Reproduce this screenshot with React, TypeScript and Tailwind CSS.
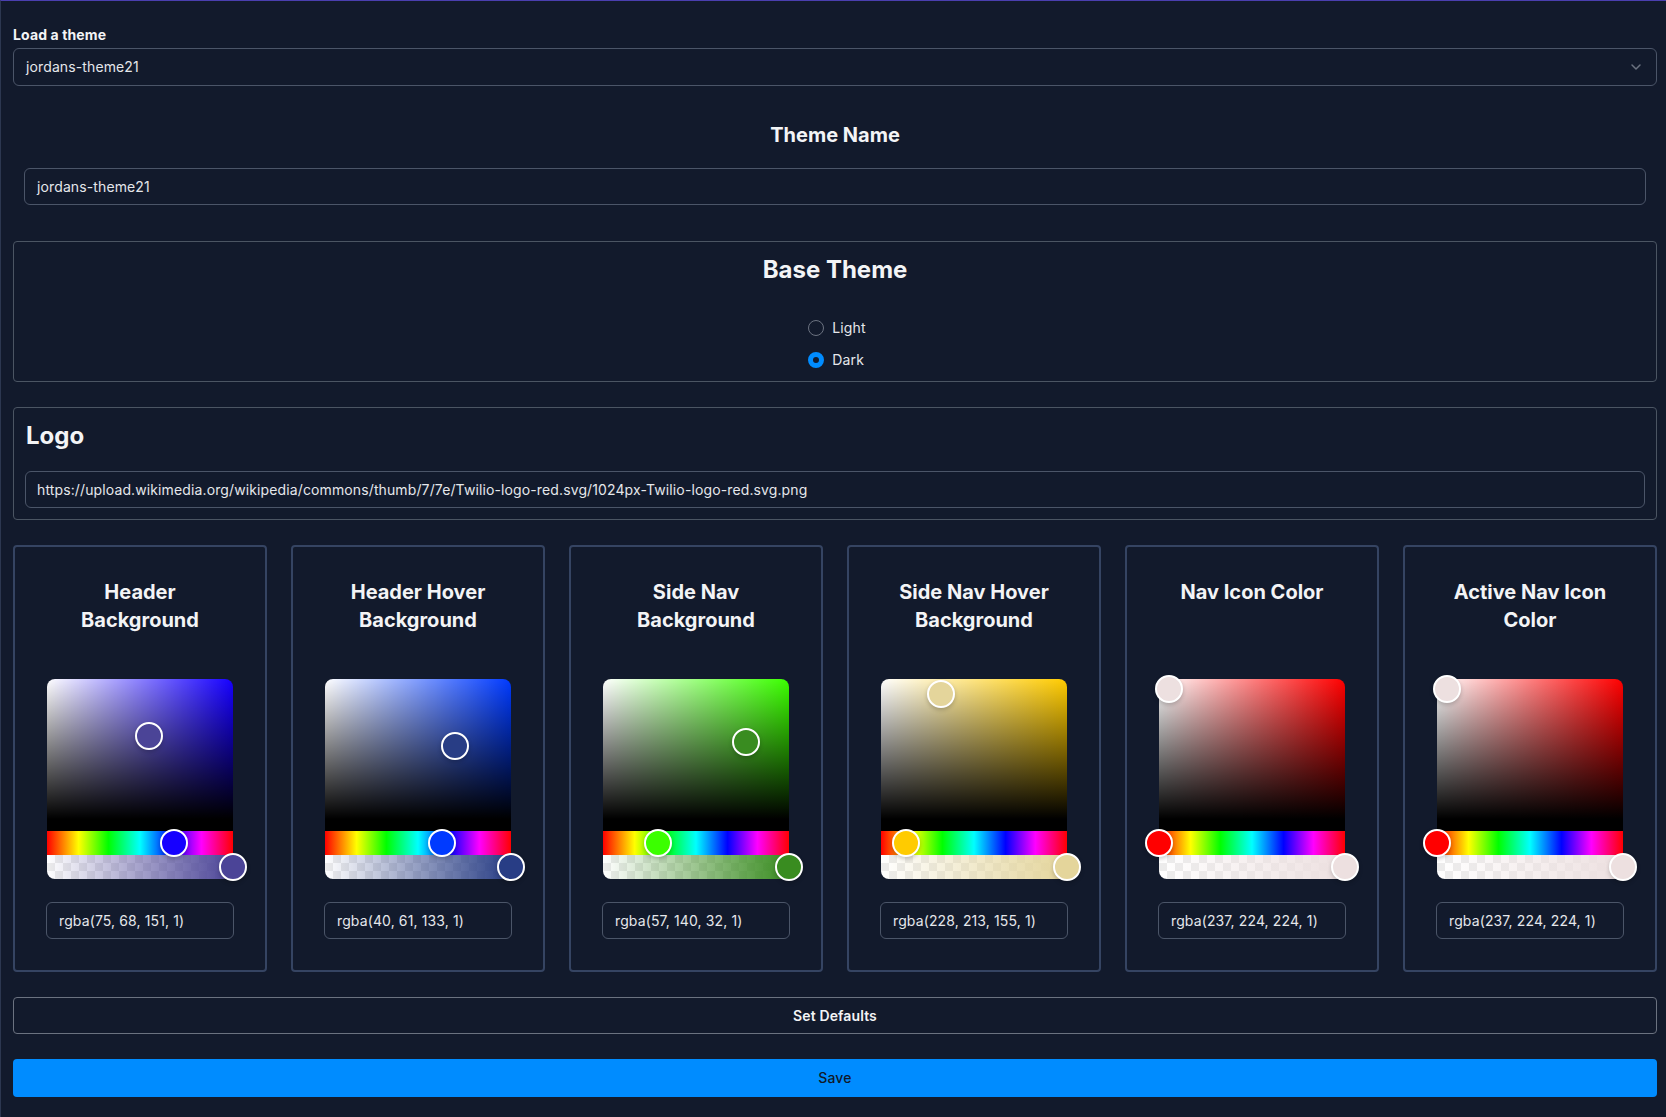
import React from "react";
import { ChevronDown } from "lucide-react";

type RGB = [number, number, number];

function rgbToHsv([r, g, b]: RGB) {
  const rr = r / 255, gg = g / 255, bb = b / 255;
  const max = Math.max(rr, gg, bb), min = Math.min(rr, gg, bb);
  const d = max - min;
  let h = 0;
  if (d !== 0) {
    if (max === rr) h = ((gg - bb) / d) % 6;
    else if (max === gg) h = (bb - rr) / d + 2;
    else h = (rr - gg) / d + 4;
    h *= 60;
    if (h < 0) h += 360;
  }
  const s = max === 0 ? 0 : d / max;
  return { h, s, v: max };
}

const Pointer = ({ left, top, color }: { left: string; top: string; color: string }) => (
  <div
    className="absolute z-10 h-7 w-7 -translate-x-1/2 -translate-y-1/2 rounded-full border-2 border-white shadow-[0_2px_4px_rgba(0,0,0,0.2)]"
    style={{ left, top, backgroundColor: color }}
  />
);

function Picker({ rgb }: { rgb: RGB }) {
  const { h, s, v } = rgbToHsv(rgb);
  const [r, g, b] = rgb;
  const col = `rgb(${r}, ${g}, ${b})`;
  return (
    <div className="relative flex h-[200px] w-[186px] flex-col select-none">
      <div
        className="relative h-[140px] rounded-t-lg"
        style={{
          backgroundColor: `hsl(${h}, 100%, 50%)`,
          backgroundImage:
            "linear-gradient(to top, #000, rgba(0,0,0,0)), linear-gradient(to right, #fff, rgba(255,255,255,0))",
        }}
      >
        <Pointer left={`${s * 100}%`} top={`${(1 - v) * 100}%`} color={col} />
      </div>
      <div className="h-3 bg-black" />
      <div className="relative h-6 bg-[linear-gradient(to_right,#f00_0%,#ff0_17%,#0f0_33%,#0ff_50%,#00f_67%,#f0f_83%,#f00_100%)]">
        <Pointer left={`${(h / 360) * 100}%`} top="50%" color={`hsl(${h}, 100%, 50%)`} />
      </div>
      <div
        className="relative h-6 rounded-b-lg"
        style={{
          background: `linear-gradient(to right, rgba(${r}, ${g}, ${b}, 0), rgba(${r}, ${g}, ${b}, 1)), repeating-conic-gradient(#ececec 0% 25%, #ffffff 0% 50%) 0 0 / 16px 16px`,
        }}
      >
        <Pointer left="100%" top="50%" color={col} />
      </div>
    </div>
  );
}

const cards: { title: string[]; rgb: RGB }[] = [
  { title: ["Header", "Background"], rgb: [75, 68, 151] },
  { title: ["Header Hover", "Background"], rgb: [40, 61, 133] },
  { title: ["Side Nav", "Background"], rgb: [57, 140, 32] },
  { title: ["Side Nav Hover", "Background"], rgb: [228, 213, 155] },
  { title: ["Nav Icon Color"], rgb: [237, 224, 224] },
  { title: ["Active Nav Icon", "Color"], rgb: [237, 224, 224] },
];

export default function App() {
  return (
    <div
      className="min-h-[1117px] border-l border-t border-l-[#2c3750] border-t-[#4a3fb0] bg-[#121a2c] pb-5 pl-3 pr-[9px] pt-6 text-[#f3f4f6]"
      style={{ fontFamily: "Inter, 'Noto Sans', sans-serif" }}
    >
      <div className="flex flex-col">
        <label className="h-5 text-sm font-bold leading-5 tracking-[0.12px] text-[#f3f4f6]">Load a theme</label>
        <div className="mt-[3px] flex h-[38px] items-center justify-between rounded-md border border-[#4b5568] bg-[#121a2c] pl-3 pr-3 text-sm tracking-[0.12px] text-[#e5e7eb]">
          <span>jordans-theme21</span>
          <ChevronDown size={16} strokeWidth={2.2} className="text-[#6b7280]" />
        </div>

        <div className="mt-[35px] px-[11px]">
          <h2 className="text-center text-xl font-bold leading-7">Theme Name</h2>
          <div className="mt-[19px] flex h-[37px] items-center rounded-md border border-[#4b5568] px-3 text-sm tracking-[0.12px] text-[#e5e7eb]">
            jordans-theme21
          </div>
        </div>

        <div className="mt-9 flex flex-col items-center rounded border border-[#4b5563] pb-[9px] pt-3">
          <h2 className="text-2xl font-bold leading-8">Base Theme</h2>
          <div className="mt-[30px] flex flex-col gap-2 pl-[4px]">
            <div className="flex h-6 items-center gap-2 text-sm tracking-[0.12px] text-[#e5e7eb]">
              <span className="h-4 w-4 rounded-full border border-[#6b7280]" />
              <span>Light</span>
            </div>
            <div className="flex h-6 items-center gap-2 text-sm tracking-[0.12px] text-[#e5e7eb]">
              <span className="h-4 w-4 rounded-full border-[5px] border-[#008cff] bg-[#121a2c]" />
              <span>Dark</span>
            </div>
          </div>
        </div>

        <div className="mt-[25px] rounded border border-[#4b5563] px-[11px] pb-[11px] pt-3">
          <h2 className="ml-px text-2xl font-bold leading-8">Logo</h2>
          <div className="mt-[19px] flex h-[37px] items-center rounded-md border border-[#4b5568] px-[11px] text-sm tracking-[0.12px] text-[#e5e7eb]">
            https://upload.wikimedia.org/wikipedia/commons/thumb/7/7e/Twilio-logo-red.svg/1024px-Twilio-logo-red.svg.png
          </div>
        </div>

        <div className="mt-[25px] grid grid-cols-6 gap-6">
          {cards.map((c, i) => {
            const [r, g, b] = c.rgb;
            return (
              <div
                key={i}
                className="flex flex-col items-center rounded border-2 border-[#354462] pb-[31px] pt-[31px]"
              >
                <div className="h-14 text-center text-xl font-bold leading-7">
                  {c.title.map((t, j) => (
                    <div key={j}>{t}</div>
                  ))}
                </div>
                <div className="mt-[45px]">
                  <Picker rgb={c.rgb} />
                </div>
                <div className="mt-[23px] flex h-[37px] w-[188px] items-center rounded-md border border-[#4b5568] px-3 text-sm tracking-[0.12px] text-[#e5e7eb]">
                  {`rgba(${r}, ${g}, ${b}, 1)`}
                </div>
              </div>
            );
          })}
        </div>

        <button className="mt-[25px] flex h-[37px] items-center justify-center rounded border border-[#6b7280] text-sm font-semibold tracking-[0.12px] text-[#f3f4f6]">
          Set Defaults
        </button>
        <button className="mt-[25px] flex h-[38px] items-center justify-center rounded bg-[#008cff] text-sm font-medium tracking-[0.12px] text-[#111827]">
          Save
        </button>
      </div>
    </div>
  );
}
